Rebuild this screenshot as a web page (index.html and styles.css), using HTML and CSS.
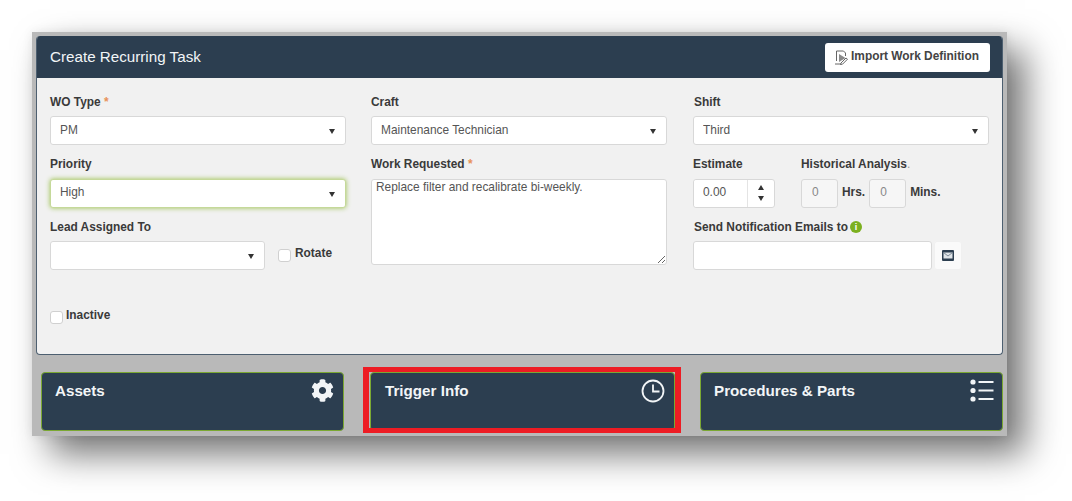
FILE: index.html
```html
<!DOCTYPE html>
<html lang="en">

<head>
    <meta charset="UTF-8">
    <title>Create Recurring Task</title>
    <link rel="stylesheet" href="styles.css">
</head>

<body>
    <div class="shot">
        <div class="panel">
            <div class="panel-head">
                <h1>Create Recurring Task</h1>
                <button class="import-btn">
                    <svg class="import-icon" viewBox="0 0 14 15" width="14" height="15">
                        <path d="M2.500 11V1h7l2 2v3" fill="none" stroke="#666" stroke-width="1" />
                        <path d="M5 4l6.500 4L5 12z" fill="#8a8a8a" />
                        <path d="M1 14h6M7 13l5-5 1.500 1.200-5 5-2 .3z" fill="#fff" stroke="#666" stroke-width="1" />
                    </svg>
                    Import Work Definition
                </button>
            </div>

            <div class="panel-body">
                <div class="col">
                    <div class="field">
                        <label>WO Type <span class="req">*</span></label>
                        <div class="select"><select><option>PM</option></select></div>
                    </div>
                    <div class="field">
                        <label>Priority</label>
                        <div class="select focused"><select><option>High</option></select></div>
                    </div>
                    <div class="field">
                        <label>Lead Assigned To</label>
                        <div class="lead-row">
                            <div class="select lead"><select><option></option></select></div>
                            <label class="check rotate"><input type="checkbox"><span>Rotate</span></label>
                        </div>
                    </div>
                    <label class="check inactive"><input type="checkbox"><span>Inactive</span></label>
                </div>

                <div class="col">
                    <div class="field">
                        <label>Craft</label>
                        <div class="select"><select><option>Maintenance Technician</option></select></div>
                    </div>
                    <div class="field">
                        <label>Work Requested <span class="req">*</span></label>
                        <textarea>Replace filter and recalibrate bi-weekly.</textarea>
                    </div>
                </div>

                <div class="col col-right">
                    <div class="field">
                        <label class="nudge">Shift</label>
                        <div class="select"><select><option>Third</option></select></div>
                    </div>
                    <div class="time-row">
                        <div class="field">
                            <label>Estimate</label>
                            <div class="spinner">
                                <input type="text" value="0.00">
                                <div class="spin-btns"><i class="up"></i><i class="down"></i></div>
                            </div>
                        </div>
                        <div class="field">
                            <label>Historical Analysis<span class="dot">.</span></label>
                            <div class="hist">
                                <input type="text" value="0" disabled><b>Hrs.</b>
                                <input type="text" value="0" disabled><b>Mins.</b>
                            </div>
                        </div>
                    </div>
                    <div class="field">
                        <label class="info-label nudge">Send Notification Emails to<span class="info">i</span></label>
                        <div class="email-row">
                            <input type="text">
                            <button class="mail-btn">
                                <svg viewBox="0 0 12 11" width="12" height="11">
                                    <rect width="12" height="11" rx="1" fill="#2c3e50" />
                                    <rect x="1.500" y="2.500" width="9" height="6" fill="#dfe4e8" />
                                    <path d="M1.500 2.500L6 6l4.500-3.500" fill="none" stroke="#7d8b98" stroke-width="1" />
                                </svg>
                            </button>
                        </div>
                    </div>
                </div>
            </div>
        </div>

        <div class="cards">
            <div class="card">
                <h2>Assets</h2>
                <svg class="card-icon" viewBox="0 0 512 512" width="23" height="23">
                    <path fill="#f2f5f7" d="M487.4 315.7l-42.6-24.6c4.3-23.2 4.3-47 0-70.2l42.6-24.6c4.9-2.8 7.1-8.6 5.5-14-11.1-35.6-30-67.8-54.7-94.6-3.8-4.1-10-5.1-14.8-2.3L380.800 110c-17.900-15.400-38.500-27.300-60.800-35.100V25.800c0-5.600-3.900-10.500-9.400-11.700-36.700-8.200-74.300-7.800-109.200 0-5.500 1.200-9.400 6.100-9.400 11.700V75c-22.200 7.900-42.800 19.800-60.800 35.100L88.700 85.500c-4.900-2.800-11-1.900-14.800 2.300-24.700 26.700-43.600 58.900-54.700 94.600-1.700 5.400.6 11.200 5.500 14L67.300 221c-4.300 23.200-4.300 47 0 70.200l-42.6 24.600c-4.900 2.800-7.100 8.600-5.500 14 11.100 35.600 30 67.800 54.700 94.600 3.800 4.100 10 5.100 14.800 2.300l42.600-24.600c17.900 15.400 38.500 27.300 60.800 35.100v49.200c0 5.600 3.900 10.500 9.400 11.700 36.700 8.200 74.300 7.800 109.200 0 5.500-1.200 9.400-6.100 9.400-11.700v-49.200c22.200-7.900 42.800-19.800 60.800-35.100l42.600 24.600c4.900 2.800 11 1.900 14.800-2.300 24.700-26.700 43.600-58.900 54.700-94.600 1.500-5.500-.7-11.300-5.600-14.100zM256 336c-44.100 0-80-35.900-80-80s35.900-80 80-80 80 35.900 80 80-35.900 80-80 80z" />
                </svg>
            </div>
            <div class="card marked">
                <h2>Trigger Info</h2>
                <svg class="card-icon" viewBox="0 0 24 24" width="24" height="24">
                    <circle cx="12" cy="12" r="10.500" fill="none" stroke="#f2f5f7" stroke-width="1.800" />
                    <path d="M12 5.500V12.500H18.500" fill="none" stroke="#f2f5f7" stroke-width="1.800" />
                </svg>
            </div>
            <div class="card list">
                <h2>Procedures &amp; Parts</h2>
                <svg class="card-icon" viewBox="0 0 24 23" width="24" height="23">
                    <g fill="#f2f5f7">
                        <circle cx="3" cy="3" r="2.600" />
                        <circle cx="3" cy="11.500" r="2.600" />
                        <circle cx="3" cy="20" r="2.600" />
                        <rect x="8.500" y="2" width="15" height="2" />
                        <rect x="8.500" y="10.500" width="15" height="2" />
                        <rect x="8.500" y="19" width="15" height="2" />
                    </g>
                </svg>
            </div>
        </div>
    </div>
</body>

</html>
```

FILE: styles.css
```css
* {
    margin: 0;
    padding: 0;
    box-sizing: border-box;
}

html,
body {
    height: 501px;
    overflow: hidden;
}

body {
    padding: 32px 0 0 32px;
    color: #3a3a3a;
    font-family: "Liberation Sans", Arial, sans-serif;
    font-size: 11.900px;
    background-color: #fff;
}

/* grey window behind the form, with the drop shadow of the picture */
.shot {
    width: 975px;
    height: 404px;
    padding: 4px;
    background-color: #b9b9b9;
    box-shadow: 18px 18px 34px rgba(0, 0, 0, .55), 0 0 10px rgba(0, 0, 0, .08);
}

.panel {
    height: 319px;
    background-color: #f1f1f1;
    border: 1px solid #4d5f70;
    border-top: 0;
    border-radius: 4px;
    overflow: hidden;
}

.panel-head {
    height: 42px;
    padding: 7px 12px 0 13px;
    display: flex;
    justify-content: space-between;
    background-color: #2c3e50;
}

.panel-head h1 {
    color: #f2f5f7;
    font-size: 15.200px;
    font-weight: normal;
    line-height: 27px;
}

.import-btn {
    width: 165px;
    height: 29px;
    display: flex;
    align-items: center;
    gap: 3px;
    padding: 0 0 3px 9px;
    color: #444;
    font-family: inherit;
    font-size: 11.900px;
    font-weight: bold;
    background-color: #fff;
    border: 0;
    border-radius: 3px;
}

.import-icon {
    margin-top: 3px;
}

.panel-body {
    padding: 16.500px 13px 0;
    display: grid;
    grid-template-columns: 296px 296px 296px;
    column-gap: 25px;
}

.col {
    display: flex;
    flex-direction: column;
    gap: 12px;
}

.col-right {
    margin: 0 -1px 0 1px;
}

.field > label {
    display: block;
    height: 14px;
    margin-bottom: 7.500px;
    line-height: 14px;
    font-weight: bold;
    white-space: nowrap;
}

.field > .nudge {
    padding-left: 1px;
}

.req {
    color: #e8915c;
}

select,
input[type="text"],
textarea {
    color: #555;
    font-family: inherit;
    font-size: 11.900px;
    background-color: #fff;
    border: 1px solid #d8d8d8;
    border-radius: 3px;
    outline: none;
}

.select {
    position: relative;
    height: 29px;
}

.select select {
    width: 100%;
    height: 100%;
    padding: 0 0 2px 9px;
    appearance: none;
}

.select::after {
    content: "";
    position: absolute;
    right: 11px;
    top: 13px;
    border-top: 5px solid #333;
    border-left: 3.500px solid transparent;
    border-right: 3.500px solid transparent;
}

.focused select {
    border-color: #c5d99a;
    box-shadow: 0 0 5px #9cc04f;
}

textarea {
    display: block;
    width: 100%;
    height: 86px;
    padding: 0 4px;
    line-height: 14px;
}

.lead-row {
    display: flex;
}

.lead {
    width: 215px;
}

.check {
    display: flex;
    align-items: flex-start;
    gap: 3px;
    font-weight: bold;
}

.check input {
    width: 13px;
    height: 13px;
    appearance: none;
    background-color: #fff;
    border: 1px solid #d0d0d0;
    border-radius: 3px;
}

.check span {
    margin-top: -3px;
    line-height: 14px;
}

.rotate {
    margin: 8px 0 0 13px;
    gap: 4px;
}

.inactive {
    margin-top: 29px;
}

.time-row {
    display: flex;
    gap: 26px;
}

.spinner {
    width: 82px;
    height: 29px;
    display: flex;
    background-color: #fff;
    border: 1px solid #d8d8d8;
    border-radius: 3px;
}

.spinner input[type="text"] {
    width: 53px;
    padding: 0 0 2px 9px;
    border: 0;
}

.spin-btns {
    flex: 1;
    display: flex;
    flex-direction: column;
    align-items: center;
    justify-content: center;
    gap: 6px;
    border-left: 1px solid #e4e4e4;
}

.spin-btns i {
    border-left: 3.500px solid transparent;
    border-right: 3.500px solid transparent;
}

.spin-btns .up {
    border-bottom: 5px solid #333;
}

.spin-btns .down {
    border-top: 5px solid #333;
}

.dot {
    color: #999;
    font-weight: normal;
}

.hist {
    display: flex;
    align-items: center;
    height: 29px;
}

.hist input[type="text"] {
    width: 37px;
    height: 29px;
    padding: 0 0 2px 10px;
    color: #888;
    background-color: #f6f6f6;
}

.hist b {
    margin: -3px 4px 0 4px;
}

.field > .info-label {
    display: flex;
    align-items: center;
    gap: 2px;
}

.info {
    width: 12px;
    height: 12px;
    color: #fff;
    font-size: 9px;
    font-weight: bold;
    line-height: 12px;
    text-align: center;
    background-color: #7cb01f;
    border-radius: 50%;
}

.email-row {
    display: flex;
    gap: 2px;
}

.email-row input[type="text"] {
    width: 239px;
    height: 29px;
}

.mail-btn {
    width: 28px;
    height: 29px;
    display: flex;
    align-items: center;
    justify-content: center;
    background-color: #fafafa;
    border: 1px solid #f0f0f0;
    border-radius: 3px;
}

.cards {
    margin: 17px 0 0 5px;
    display: flex;
}

.card {
    position: relative;
    width: 303px;
    height: 59px;
    padding: 6px 9px 0 13px;
    display: flex;
    justify-content: space-between;
    background-color: #2c3e50;
    border: 1px solid #7ba832;
    border-radius: 4px;
}

.card h2 {
    color: #f2f5f7;
    font-size: 15.200px;
    line-height: 24px;
}

.list {
    padding-right: 8px;
}

/* red highlight drawn on top of the second card */
.marked {
    width: 305px;
    margin: 0 25px 0 26px;
    padding-left: 14px;
}

.marked::after {
    content: "";
    position: absolute;
    left: -8px;
    right: -7px;
    top: -6px;
    bottom: -3px;
    border: 5px solid #ed1c24;
    border-width: 5px 6px;
}
```
